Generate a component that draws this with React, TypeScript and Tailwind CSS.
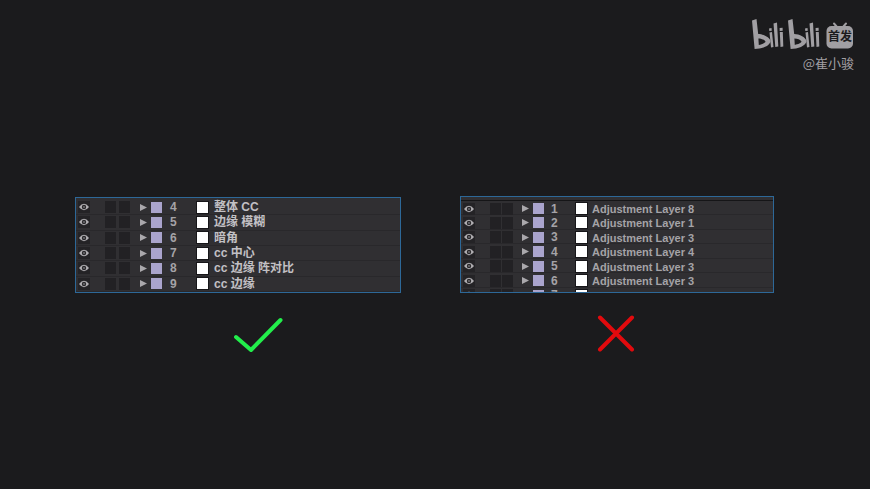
import React from "react";

type Layer = { id: number; name: string };

const organized: Layer[] = [
  { id: 4, name: "整体 CC" },
  { id: 5, name: "边缘 模糊" },
  { id: 6, name: "暗角" },
  { id: 7, name: "cc 中心" },
  { id: 8, name: "cc 边缘 阵对比" },
  { id: 9, name: "cc 边缘" },
];

const unnamed: Layer[] = [
  { id: 1, name: "Adjustment Layer 8" },
  { id: 2, name: "Adjustment Layer 1" },
  { id: 3, name: "Adjustment Layer 3" },
  { id: 4, name: "Adjustment Layer 4" },
  { id: 5, name: "Adjustment Layer 3" },
  { id: 6, name: "Adjustment Layer 3" },
  { id: 7, name: "Adjustment Layer 4" },
];

const Eye = () => (
  <svg viewBox="0 0 12 12" className="size-3 bg-[#242326]">
    <path d="M1 6Q6 -0.5 11 6Q6 12.5 1 6Z" fill="#b0aeb2" />
    <circle cx="6" cy="6" r="2.2" fill="#29282b" />
    <circle cx="6" cy="6" r="0.9" fill="#77757a" />
  </svg>
);

const Arrow = () => (
  <svg viewBox="0 0 7 7" className="size-[7px]">
    <path d="M0 0L7 3.5L0 7Z" fill="#aaa8ac" />
  </svg>
);

const LayerCells = ({ layer }: { layer: Layer }) => (
  <>
    <Eye />
    <span className="h-3 w-[11px] bg-[#222124]" />
    <span className="h-3 w-[11px] bg-[#222124]" />
    <Arrow />
    <span className="size-[11px] bg-[#aaa4cd]" />
    <span className="text-xs leading-[14px]">{layer.id}</span>
    <span className="size-[11px] bg-white outline outline-[#171619]" />
  </>
);

const App = () => {
  return (
    <div className="min-h-screen bg-[#1b1b1d] font-['Liberation_Sans','Noto_Sans_CJK_SC',sans-serif]">
      <header className="flex h-[196px] flex-col items-end pr-4 pt-[18px] text-[#a19fa3]">
        <div className="flex">
          <svg viewBox="0 0 68 32" className="h-8 w-[68px]" fill="currentColor" role="img" aria-label="bilibili">
            <g id="bili">
              <path fillRule="evenodd" d="M0 2.5L4.5 1L6.2 16C11 16 18.5 19.5 18.5 23.5C17.5 28 10 31 2.6 31ZM6.4 20.5L6.8 27C10 26.3 13.5 25 13.5 23.6C12.5 21.8 9.5 20.5 6.4 20.5Z" />
              <path d="M17.5 14.5L20 14L21.5 29L19 29.5ZM17 10.5L19.5 10L19.8 12.7L17.3 13ZM21.5 5.5L25 4.5L26.3 28.5L23.3 29ZM27.8 14L30.8 14L31.3 28.5L28.5 29ZM27.6 10L30.6 9.7L30.7 12.7L27.7 12.9Z" />
            </g>
            <use href="#bili" x="36" />
          </svg>
          <div className="relative ml-[6px] h-8 w-7">
            <svg viewBox="0 0 28 32" className="size-full">
              <path d="M8 5.5L11 9M20 5.5L17 9" stroke="currentColor" strokeWidth="2" strokeLinecap="round" />
              <rect x="0.5" y="8" width="26.5" height="22.5" rx="5" fill="currentColor" />
            </svg>
            <span className="absolute inset-x-0 top-[10px] text-center text-xs font-bold leading-[18px] text-[#1b1b1d]">首发</span>
          </div>
        </div>
        <p className="mt-1 font-['Noto_Sans_CJK_SC',sans-serif] text-[13px] leading-[18px]">@崔小骏</p>
      </header>

      <main className="flex items-start gap-[59px] pl-[75px] pr-24 text-[11px] font-bold leading-[14px] text-[#a5a3a7]">
        <section className="flex flex-[326] flex-col items-center">
          <div className="mt-px w-full border border-[#2d6898] bg-[#302f32] pt-[2px]">
            <div className="grid h-[92px] auto-rows-fr">
              {organized.map((layer) => (
                <div key={layer.id} className="grid grid-cols-[27px_14px_21px_11px_19px_27px_17px_1fr] items-center border-b border-[#29282b] pl-[2px]">
                  <LayerCells layer={layer} />
                  <span className="whitespace-pre text-xs leading-[14px] text-[#c2c0c4]">{layer.name}</span>
                </div>
              ))}
            </div>
          </div>
          <svg viewBox="0 0 50 36" className="ml-10 mt-6 h-9 w-[50px]" fill="none">
            <path d="M3 20L18 33L47.5 3" stroke="#22ee4b" strokeWidth="4" strokeLinecap="round" strokeLinejoin="round" />
          </svg>
        </section>

        <section className="flex flex-[314] flex-col items-center">
          <div className="h-[97px] w-full overflow-hidden border border-[#2d6898] bg-[#302f32]">
            <div className="h-1 border-b border-[#151517]" />
            <div className="grid h-[101px] auto-rows-fr">
              {unnamed.map((layer) => (
                <div key={layer.id} className="grid grid-cols-[27px_12px_20px_11px_18px_25px_16px_1fr] items-center border-b border-[#29282b] pl-[2px]">
                  <LayerCells layer={layer} />
                  <span className="whitespace-pre pt-px">{layer.name}</span>
                </div>
              ))}
            </div>
          </div>
          <svg viewBox="0 0 38 38" className="mr-[2px] mt-[22px] size-[38px]" fill="none">
            <path d="M3 2.5L35 34.5M35 2.5L3 34.5" stroke="#e20a0d" strokeWidth="4" strokeLinecap="round" />
          </svg>
        </section>
      </main>
    </div>
  );
};

export default App;
